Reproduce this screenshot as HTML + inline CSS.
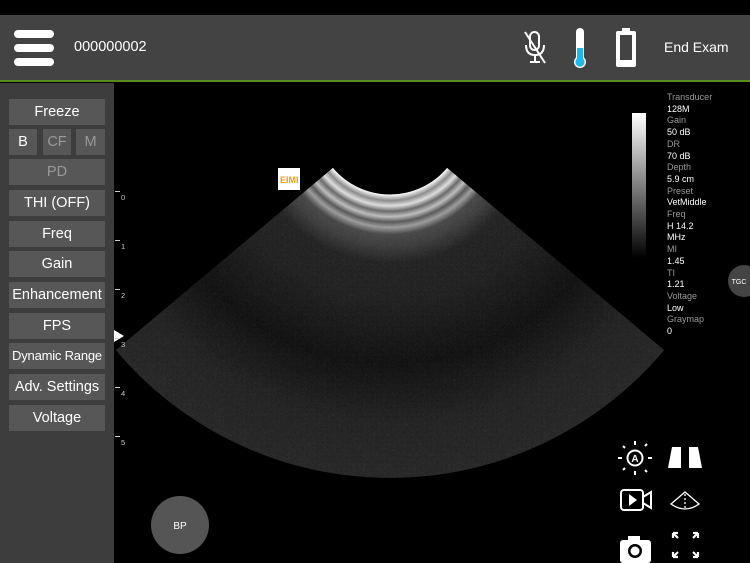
<!DOCTYPE html>
<html><head><meta charset="utf-8"><style>
*{margin:0;padding:0;box-sizing:border-box}
body{width:750px;height:563px;background:#000;overflow:hidden;position:relative;font-family:"Liberation Sans",sans-serif;color:#fff}
.top{position:absolute;left:0;top:15px;width:750px;height:65px;background:#434343}
.gl{position:absolute;left:0;top:80px;width:750px;height:2px;background:#5c8a22}
.ham{position:absolute;left:14px;width:40px;height:8px;background:#fff;border-radius:4px}
.left{position:absolute;left:0;top:83px;width:114px;height:480px;background:#3d3d3d}
.btn{position:absolute;left:9px;width:96px;height:26px;background:#575757;color:#fff;font-size:14.5px;text-align:center;line-height:26px;white-space:nowrap;overflow:hidden}
.dim{color:#999}
.info{position:absolute;left:667px;top:92px;font-size:9px;line-height:11.7px}
.info .l{color:#999}
.tk{position:absolute;left:115px;width:5px;height:1px;background:#ccc}
.tl{position:absolute;left:121px;font-size:7.5px;color:#ccc}
</style></head><body>
<div class="top"></div><div class="gl"></div>
<div class="ham" style="top:30px"></div><div class="ham" style="top:44px"></div><div class="ham" style="top:58px"></div>
<div style="position:absolute;left:74px;top:39px;font-size:14.5px">000000002</div>
<div style="position:absolute;left:664px;top:39px;font-size:14px">End Exam</div>
<svg style="position:absolute;left:520px;top:28px" width="30" height="40" viewBox="0 0 30 40">
<rect x="10" y="4" width="9" height="18" rx="4.5" fill="none" stroke="#fff" stroke-width="2"/>
<path d="M6 17 Q6 27 15 27 Q24 27 24 17 M15 27 V33 M10 34 H20 M5 4 L25 35" fill="none" stroke="#fff" stroke-width="2"/>
</svg>
<svg style="position:absolute;left:570px;top:26px" width="20" height="44" viewBox="0 0 20 44">
<rect x="6" y="2" width="8" height="34" rx="4" fill="#fff"/><circle cx="10" cy="36" r="6" fill="#fff"/>
<rect x="7" y="22" width="6" height="14" fill="#1fb8ea"/><circle cx="10" cy="36" r="4.6" fill="#1fb8ea"/>
</svg>
<svg style="position:absolute;left:614px;top:26px" width="24" height="44" viewBox="0 0 24 44">
<rect x="8" y="2" width="8" height="4" fill="#fff"/><rect x="2" y="5" width="20" height="36" rx="2" fill="#fff"/>
<rect x="6" y="9" width="12" height="25" fill="#434343"/>
</svg>
<div class="left"></div>
<div class="btn" style="top:99px">Freeze</div>
<div class="btn" style="top:129px;width:28px">B</div>
<div class="btn dim" style="top:129px;left:43px;width:28px">CF</div>
<div class="btn dim" style="top:129px;left:76px;width:29px">M</div>
<div class="btn dim" style="top:159px">PD</div>
<div class="btn" style="top:190px">THI (OFF)</div>
<div class="btn" style="top:221px">Freq</div>
<div class="btn" style="top:251px">Gain</div>
<div class="btn" style="top:282px">Enhancement</div>
<div class="btn" style="top:313px">FPS</div>
<div class="btn" style="top:343px;font-size:13px;letter-spacing:-0.2px">Dynamic Range</div>
<div class="btn" style="top:374px">Adv. Settings</div>
<div class="btn" style="top:405px">Voltage</div>
<svg style="position:absolute;left:0;top:0" width="750" height="563">
<defs>
<radialGradient id="g" gradientUnits="userSpaceOnUse" cx="390" cy="120" r="358">
<stop offset="0.208" stop-color="#fff"/>
<stop offset="0.225" stop-color="#888"/>
<stop offset="0.24" stop-color="#ddd"/>
<stop offset="0.255" stop-color="#666"/>
<stop offset="0.27" stop-color="#bbb"/>
<stop offset="0.285" stop-color="#555"/>
<stop offset="0.30" stop-color="#999"/>
<stop offset="0.32" stop-color="#444"/>
<stop offset="0.35" stop-color="#3a3a3a"/>
<stop offset="0.40" stop-color="#1e1e1e"/>
<stop offset="0.5" stop-color="#1c1c1c"/>
<stop offset="0.68" stop-color="#0c0c0c"/>
<stop offset="0.85" stop-color="#1e1e1e"/>
<stop offset="1" stop-color="#222"/>
</radialGradient>
<linearGradient id="bar" x1="0" y1="0" x2="0" y2="1"><stop offset="0" stop-color="#fff"/><stop offset="1" stop-color="#000"/></linearGradient>
<filter id="n"><feTurbulence baseFrequency="0.9" numOctaves="2" seed="3"/><feColorMatrix values="0 0 0 0 1 0 0 0 0 1 0 0 0 0 1 0 0 0 0.12 0"/><feComposite in2="SourceGraphic" operator="in"/></filter>
</defs>
<path d="M332.9,167.9 L115.8,350.1 A358,358 0 0 0 664.2,350.1 L447.1,167.9 A74.5,74.5 0 0 1 332.9,167.9 Z" fill="url(#g)"/>
<path d="M332.9,167.9 L115.8,350.1 A358,358 0 0 0 664.2,350.1 L447.1,167.9 A74.5,74.5 0 0 1 332.9,167.9 Z" fill="#fff" filter="url(#n)"/>
<rect x="632" y="113" width="14" height="145" fill="url(#bar)"/>
<rect x="278" y="168" width="22" height="22" fill="#fff"/>
<text x="280" y="183" font-size="9" font-weight="bold" fill="#f39a1e" font-family="Liberation Sans">EIMI</text>
<polygon points="114,330 124,336 114,342" fill="#fff"/>
<circle cx="180" cy="525" r="29" fill="#555"/>
<text x="180" y="529" font-size="10" fill="#fff" text-anchor="middle" font-family="Liberation Sans">BP</text>
<circle cx="744" cy="281" r="16" fill="#444"/>
<text x="739" y="284" font-size="7" fill="#fff" text-anchor="middle" font-family="Liberation Sans">TGC</text>
<g fill="#fff" stroke="#fff">
<circle cx="635" cy="458" r="7.5" fill="none" stroke-width="2"/>
<text x="635" y="462" font-size="10" font-weight="bold" text-anchor="middle" stroke="none" font-family="Liberation Sans">A</text>
<g stroke-width="2"><path d="M635 441v4M635 471v4M618 458h4M648 458h4M623 446l2 2M645 446l2-2M623 470l2-2M645 470l2 2"/></g>
<polygon points="672,447 681,447 681,468 668,468" stroke="none"/>
<polygon points="689,447 698,447 702,468 689,468" stroke="none"/>
<rect x="621" y="490" width="22" height="20" rx="3" fill="none" stroke-width="2"/>
<polygon points="629,494 629,506 637,500" stroke="none"/>
<polygon points="643,497 651,492 651,508 643,503" fill="none" stroke-width="2"/>
<path d="M671 504 L685 492 L699 504 Q685 514 671 504 Z" fill="none" stroke-width="1.3"/>
<path d="M685 494v16" stroke-width="1.3" stroke-dasharray="2 2"/>
<rect x="620" y="540" width="31" height="23" rx="3" stroke="none"/><rect x="628" y="536" width="12" height="6" stroke="none"/>
<circle cx="635" cy="551" r="7" fill="#000" stroke="none"/><circle cx="635" cy="551" r="4.5" stroke="none"/>
<path d="M673 533l5 5M673 533h5M673 533v5M698 533l-5 5M698 533h-5M698 533v5M673 557l5-5M673 557h5M673 557v-5M698 557l-5-5M698 557h-5M698 557v-5" stroke-width="2.2" fill="none"/>
</g>
</svg>
<div class="tk" style="top:191px"></div><div class="tl" style="top:193px">0</div>
<div class="tk" style="top:240px"></div><div class="tl" style="top:242px">1</div>
<div class="tk" style="top:289px"></div><div class="tl" style="top:291px">2</div>
<div class="tk" style="top:338px"></div><div class="tl" style="top:340px">3</div>
<div class="tk" style="top:387px"></div><div class="tl" style="top:389px">4</div>
<div class="tk" style="top:436px"></div><div class="tl" style="top:438px">5</div>
<div class="info">
<div class="l">Transducer</div><div>128M</div><div class="l">Gain</div><div>50 dB</div><div class="l">DR</div><div>70 dB</div><div class="l">Depth</div><div>5.9 cm</div><div class="l">Preset</div><div>VetMiddle</div><div class="l">Freq</div><div>H 14.2</div><div>MHz</div><div class="l">MI</div><div>1.45</div><div class="l">TI</div><div>1.21</div><div class="l">Voltage</div><div>Low</div><div class="l">Graymap</div><div>0</div>
</div>
</body></html>
